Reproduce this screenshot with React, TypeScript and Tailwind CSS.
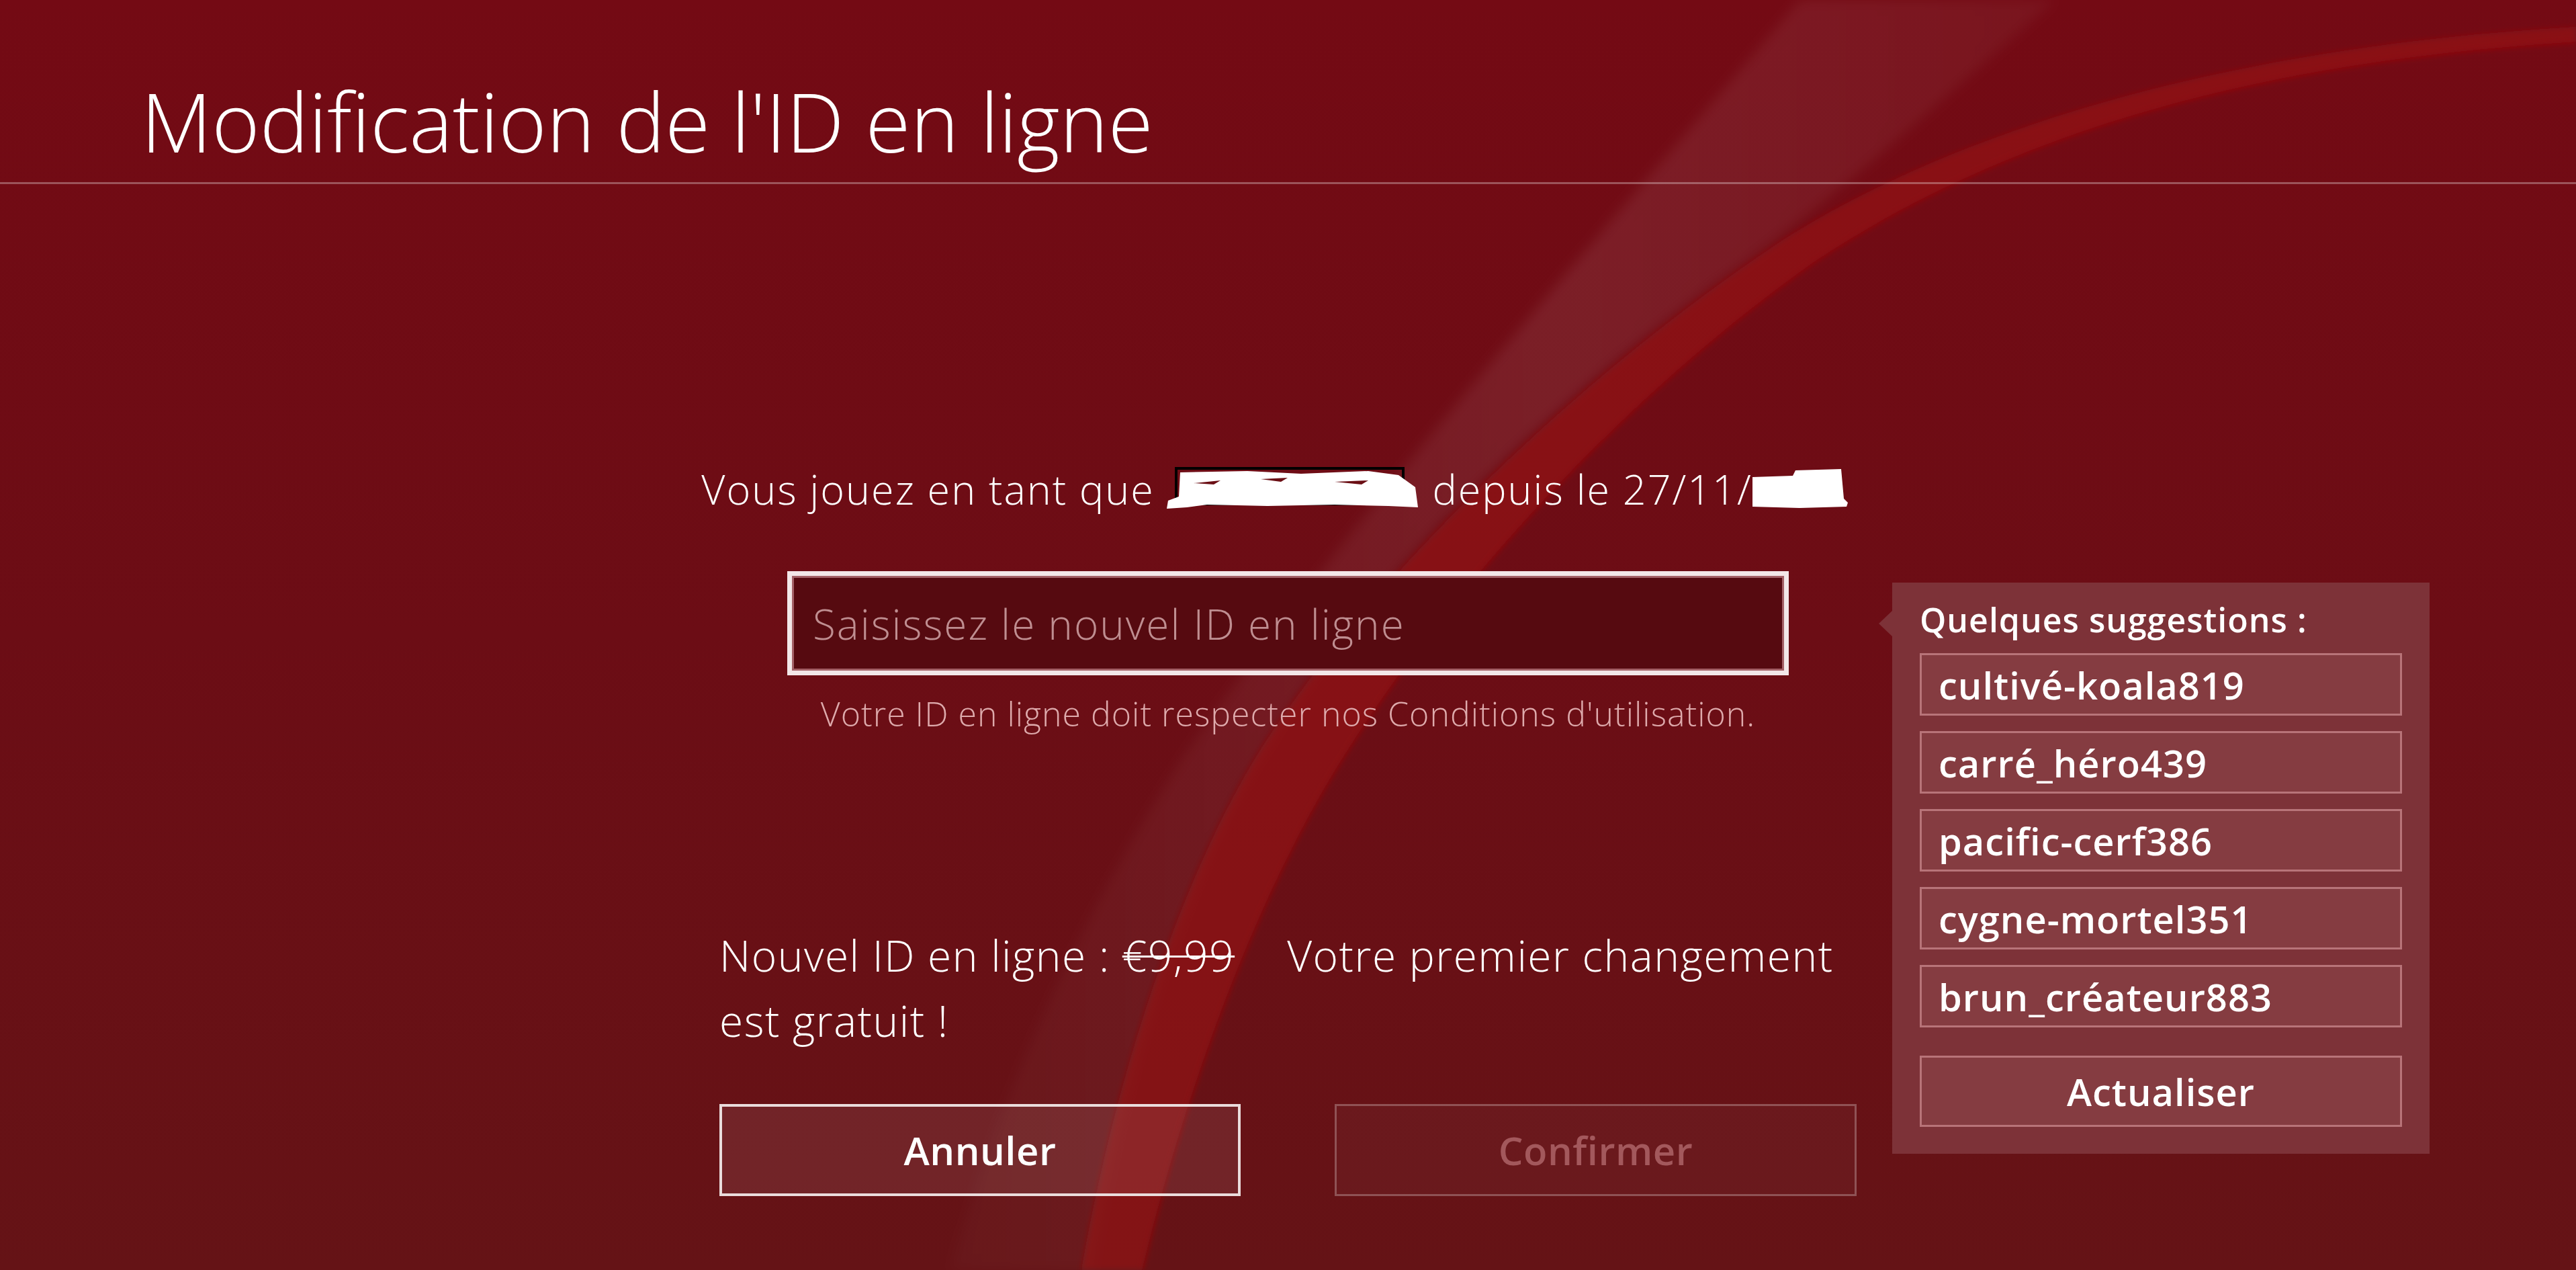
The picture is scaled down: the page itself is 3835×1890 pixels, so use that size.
import React from "react";

const suggestions = [
  "cultivé-koala819",
  "carré_héro439",
  "pacific-cerf386",
  "cygne-mortel351",
  "brun_créateur883",
];

function Background() {
  return (
    <svg
      className="pointer-events-none absolute inset-0 h-full w-full"
      viewBox="0 0 3835 1890"
      preserveAspectRatio="none"
    >
      <defs>
        <linearGradient id="bg" x1="0" y1="0" x2="0" y2="1">
          <stop offset="0" stopColor="#740a14" />
          <stop offset="0.5" stopColor="#6c0d15" />
          <stop offset="1" stopColor="#651316" />
        </linearGradient>
        <linearGradient id="band" x1="0" y1="0" x2="1" y2="0">
          <stop offset="0" stopColor="#ffffff" stopOpacity="0.02" />
          <stop offset="0.55" stopColor="#ffffff" stopOpacity="0.08" />
          <stop offset="1" stopColor="#ffffff" stopOpacity="0.04" />
        </linearGradient>
        <filter id="soft" x="-10%" y="-10%" width="120%" height="120%">
          <feGaussianBlur stdDeviation="9" />
        </filter>
        <filter id="soft2" x="-10%" y="-10%" width="120%" height="120%">
          <feGaussianBlur stdDeviation="4" />
        </filter>
      </defs>
      <rect x="0" y="0" width="3835" height="1890" fill="url(#bg)" />
      <path
        d="M 2680 0 C 2400 330, 2000 780, 1760 1130 C 1600 1380, 1480 1650, 1415 1890 L 1625 1890 C 1670 1600, 1760 1310, 1885 1110 C 2040 860, 2300 600, 2600 390 C 2760 270, 2900 140, 3060 0 Z"
        fill="url(#band)"
        filter="url(#soft)"
      />
      <path
        d="M 3835 40 C 3300 70, 2900 200, 2650 360 C 2350 560, 2050 850, 1880 1110 C 1760 1300, 1660 1600, 1610 1890 L 1700 1890 C 1770 1600, 1880 1310, 2010 1110 C 2170 860, 2430 580, 2700 390 C 3000 190, 3380 90, 3835 62 Z"
        fill="#9c161a"
        fillOpacity="0.55"
        filter="url(#soft2)"
      />
      <path
        d="M 3835 62 C 3380 90, 3000 190, 2700 390 C 2430 580, 2170 860, 2010 1110 C 1880 1310, 1770 1600, 1700 1890"
        fill="none"
        stroke="#b81e1e"
        strokeOpacity="0.35"
        strokeWidth="4"
        filter="url(#soft2)"
      />
    </svg>
  );
}

function RedactName() {
  return (
    <svg width="378" height="64" viewBox="0 0 378 64" className="inline-block align-[-16px]">
      <rect x="14" y="2" width="338" height="53" fill="none" stroke="#000" strokeWidth="4" />
      <path
        d="M 20 8 L 120 6 L 200 10 L 300 6 L 345 12 L 370 30 L 374 60 L 330 58 L 250 56 L 150 58 L 60 56 L 30 60 L 0 62 L 2 50 L 18 44 Z"
        fill="#ffffff"
      />
      <path d="M 40 24 L 80 20 L 70 26 Z M 140 18 L 180 16 L 170 22 Z M 250 22 L 300 20 L 290 26 Z" fill="#6b0f15" />
    </svg>
  );
}

function RedactYear() {
  return (
    <svg width="142" height="58" viewBox="0 0 142 58" className="inline-block align-[-6px]">
      <path d="M 0 12 L 60 10 L 64 2 L 132 0 L 136 44 L 142 50 L 140 56 L 70 58 L 0 56 Z" fill="#ffffff" />
    </svg>
  );
}

export default function App() {
  return (
    <div className="relative h-[1890px] w-[3835px] overflow-hidden bg-[#6c0d15] font-['Open_Sans','Noto_Sans',sans-serif] text-white">
      <Background />
      <div className="relative flex h-full flex-col">
        <header className="h-[274px] border-b-[3px] border-[#ffffff]/30 pl-[210px] pt-[119px]">
          <h1 className="text-[122px] font-light leading-none tracking-[0px] text-white">
            Modification de l'ID en ligne
          </h1>
        </header>

        <main className="flex flex-col items-center">
          <p className="mt-[423px] flex h-[60px] items-center whitespace-nowrap pr-[40px] text-[61px] font-light leading-none tracking-[2px] text-white">
            <span>Vous jouez en tant que&nbsp;</span>
            <RedactName />
            <span>&nbsp;depuis le 27/11/</span>
            <RedactYear />
          </p>

          <div className="relative mt-[93px] w-[1491px]">
            <div className="flex h-[155px] items-center border-[7px] border-[#f3e7e8] bg-[#560a10] pl-[31px] shadow-[inset_0_0_0_3px_rgba(230,170,175,0.55)]">
              <span className="text-[62px] font-light leading-none tracking-[2px] text-[#bf8e91]">
                Saisissez le nouvel ID en ligne
              </span>
            </div>

            <div className="absolute left-[1645px] top-[17px] w-[800px] bg-[#7d3238] px-[41px] pb-[40px] pt-[30px]">
              <div className="absolute left-[-20px] top-[42px] h-0 w-0 border-y-[19px] border-r-[20px] border-y-transparent border-r-[#7d3238]" />
              <div className="text-[50px] font-semibold leading-none tracking-[1px] text-white">Quelques suggestions :</div>
              <div className="mt-[25px] flex flex-col gap-[23px]">
                {suggestions.map((s) => (
                  <div
                    key={s}
                    className="flex h-[93px] items-center border-[3px] border-[#b87479] bg-[#853c41] pl-[25px] text-[56px] font-semibold leading-none tracking-[1px] text-white"
                  >
                    {s}
                  </div>
                ))}
              </div>
              <div className="mt-[42px] flex h-[106px] items-center justify-center border-[3px] border-[#b87479] bg-[#853c41] text-[56px] font-semibold leading-none tracking-[1px] text-white">
                Actualiser
              </div>
            </div>
          </div>

          <p className="mt-[32px] text-[50px] font-light leading-none tracking-[1px] text-[#deaaac]">
            Votre ID en ligne doit respecter nos Conditions d'utilisation.
          </p>

          <p className="mt-[286px] w-[1693px] text-[64px] font-light leading-[97px] tracking-[1.5px] text-white">
            Nouvel ID en ligne : <span className="line-through decoration-[3px]">€9,99</span>
            <span className="inline-block w-[78px]" />
            Votre premier changement
            <br />
            est gratuit !
          </p>

          <div className="mt-[76px] flex w-[1693px] justify-between">
            <div className="flex h-[137px] w-[776px] items-center justify-center border-[4px] border-[#eadcdc] bg-[#ffffff]/[0.08] text-[58px] font-semibold leading-none tracking-[0.5px] text-white">
              Annuler
            </div>
            <div className="flex h-[137px] w-[777px] items-center justify-center border-[3px] border-[#ffffff]/25 bg-[#ffffff]/[0.03] text-[58px] font-semibold leading-none tracking-[0.5px] text-[#a3585c]">
              Confirmer
            </div>
          </div>
        </main>
      </div>
    </div>
  );
}
